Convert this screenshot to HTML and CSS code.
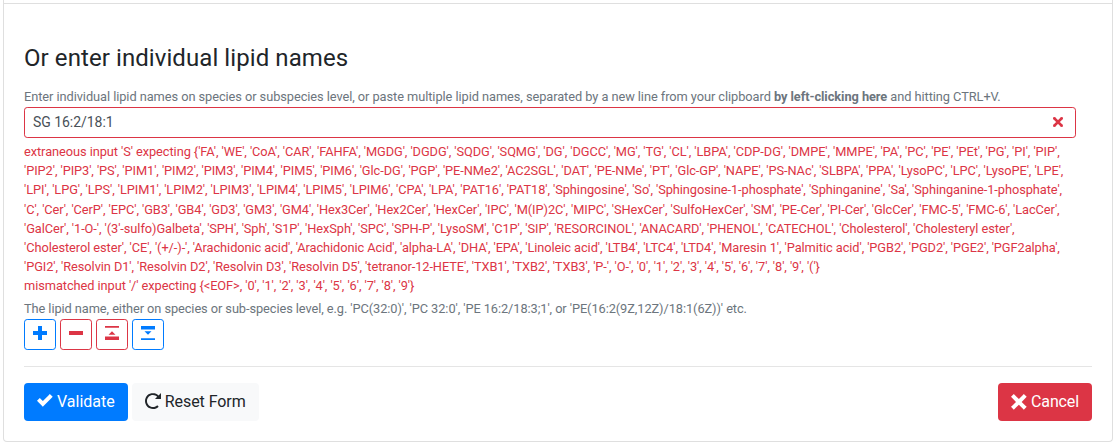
FILE: index.html
```html
<!DOCTYPE html>
<html lang="en">
<head>
<meta charset="utf-8">
<title>Lipid names</title>
<link rel="stylesheet" href="styles.css">
</head>
<body>
<main class="card">
  <div class="card-divider"></div>
  <form class="card-body">
    <h4 class="title">Or enter individual lipid names</h4>
    <p class="small muted">Enter individual lipid names on species or subspecies level, or paste multiple lipid names, separated by a new line from your clipboard <strong>by left-clicking here</strong> and hitting CTRL+V.</p>
    <div class="field">
      <div class="control">
        <span>SG 16:2/18:1</span>
        <svg class="invalid-icon" viewBox="-.5 -.5 4 4"><path d="M0 0l3 3m0-3L0 3" stroke="currentColor" fill="none"/><g fill="currentColor"><circle r=".5"/><circle cx="3" r=".5"/><circle cy="3" r=".5"/><circle cx="3" cy="3" r=".5"/></g></svg>
      </div>
      <div class="small feedback">extraneous input 'S' expecting {'FA', 'WE', 'CoA', 'CAR', 'FAHFA', 'MGDG', 'DGDG', 'SQDG', 'SQMG', 'DG', 'DGCC', 'MG', 'TG', 'CL', 'LBPA', 'CDP-DG', 'DMPE', 'MMPE', 'PA', 'PC', 'PE', 'PEt', 'PG', 'PI', 'PIP',<br>
'PIP2', 'PIP3', 'PS', 'PIM1', 'PIM2', 'PIM3', 'PIM4', 'PIM5', 'PIM6', 'Glc-DG', 'PGP', 'PE-NMe2', 'AC2SGL', 'DAT', 'PE-NMe', 'PT', 'Glc-GP', 'NAPE', 'PS-NAc', 'SLBPA', 'PPA', 'LysoPC', 'LPC', 'LysoPE', 'LPE',<br>
'LPI', 'LPG', 'LPS', 'LPIM1', 'LPIM2', 'LPIM3', 'LPIM4', 'LPIM5', 'LPIM6', 'CPA', 'LPA', 'PAT16', 'PAT18', 'Sphingosine', 'So', 'Sphingosine-1-phosphate', 'Sphinganine', 'Sa', 'Sphinganine-1-phosphate',<br>
'C', 'Cer', 'CerP', 'EPC', 'GB3', 'GB4', 'GD3', 'GM3', 'GM4', 'Hex3Cer', 'Hex2Cer', 'HexCer', 'IPC', 'M(IP)2C', 'MIPC', 'SHexCer', 'SulfoHexCer', 'SM', 'PE-Cer', 'PI-Cer', 'GlcCer', 'FMC-5', 'FMC-6', 'LacCer',<br>
'GalCer', '1-O-', '(3'-sulfo)Galbeta', 'SPH', 'Sph', 'S1P', 'HexSph', 'SPC', 'SPH-P', 'LysoSM', 'C1P', 'SIP', 'RESORCINOL', 'ANACARD', 'PHENOL', 'CATECHOL', 'Cholesterol', 'Cholesteryl ester',<br>
'Cholesterol ester', 'CE', '(+/-)-', 'Arachidonic acid', 'Arachidonic Acid', 'alpha-LA', 'DHA', 'EPA', 'Linoleic acid', 'LTB4', 'LTC4', 'LTD4', 'Maresin 1', 'Palmitic acid', 'PGB2', 'PGD2', 'PGE2', 'PGF2alpha',<br>
'PGI2', 'Resolvin D1', 'Resolvin D2', 'Resolvin D3', 'Resolvin D5', 'tetranor-12-HETE', 'TXB1', 'TXB2', 'TXB3', 'P-', 'O-', '0', '1', '2', '3', '4', '5', '6', '7', '8', '9', '('}<br>
mismatched input '/' expecting {&lt;EOF&gt;, '0', '1', '2', '3', '4', '5', '6', '7', '8', '9'}</div>
      <p class="small muted help">The lipid name, either on species or sub-species level, e.g. 'PC(32:0)', 'PC 32:0', 'PE 16:2/18:3;1', or 'PE(16:2(9Z,12Z)/18:1(6Z))' etc.</p>
    </div>
    <div class="tools">
      <button type="button" class="tool blue" aria-label="Add"><svg viewBox="0 0 14 14"><path d="M5 0h4v5h5v4H9v5H5V9H0V5h5z"/></svg></button>
      <button type="button" class="tool red" aria-label="Remove"><svg viewBox="0 0 14 14"><path d="M0 5h14v4H0z"/></svg></button>
      <button type="button" class="tool red" aria-label="Collapse up"><svg viewBox="0 0 14 14"><path d="M0 0h14v1.75H0zM7 5.25l3.5 3.5h-7zM0 10.5h14V14H0z"/></svg></button>
      <button type="button" class="tool blue" aria-label="Collapse down"><svg viewBox="0 0 14 14"><path d="M0 0h14v3.5H0zM3.5 5.25h7L7 8.75zM0 12.25h14V14H0z"/></svg></button>
    </div>
    <hr class="rule">
    <div class="actions">
      <button type="button" class="btn primary"><svg viewBox="0 0 8 8"><path transform="translate(0 .5)" d="M6.41 0l-.69.72-2.78 2.78-.81-.78-.72-.72-1.41 1.41.72.72 1.5 1.5.69.72.72-.72 3.5-3.5.72-.72-1.44-1.41z"/></svg><span>Validate</span></button>
      <button type="button" class="btn light"><svg viewBox="0 0 8 8"><path d="M4 0c-2.2 0-4 1.8-4 4s1.8 4 4 4c1.1 0 2.12-.43 2.84-1.16l-.72-.72c-.54.54-1.29.88-2.13.88-1.66 0-3-1.34-3-3s1.34-3 3-3c.83 0 1.55.36 2.09.91l-1.09 1.09h3v-3l-1.19 1.19c-.72-.72-1.71-1.19-2.81-1.19z"/></svg><span>Reset Form</span></button>
      <button type="button" class="btn danger"><svg viewBox="0 0 8 8"><path d="M1.41 0l-1.41 1.41.72.72 1.78 1.81-1.78 1.78-.72.69 1.41 1.44.72-.72 1.81-1.81 1.78 1.81.69.72 1.44-1.44-.72-.69-1.81-1.78 1.81-1.81.72-.72-1.44-1.41-.69.72-1.78 1.78-1.81-1.78-.72-.72z"/></svg><span>Cancel</span></button>
    </div>
  </form>
</main>
</body>
</html>
```
FILE: styles.css
```css
* { box-sizing: border-box; }
body {
  margin: 0;
  padding: 0 2px 0 3px;
  background: #fff;
  color: #212529;
  font: 16px/1.5 Roboto, "Liberation Sans", sans-serif;
  overflow: hidden;
}
.card {
  height: 442px;
  padding-top: 3px;
  border: 1px solid #dfdfdf;
  border-top: 0;
  border-radius: 0 0 4px 4px;
}
.card-divider { height: 1px; background: #dfdfdf; }
.card-body { padding: 40px 20px 20px; }
.title { margin: 0 0 14.4px; font-size: 24px; font-weight: 400; line-height: 28.8px; letter-spacing: .08px; }
.small { margin: 0; font-size: 12.8px; line-height: 19.2px; letter-spacing: -.06px; white-space: nowrap; }
.muted { color: #6c757d; }
.small strong { font-weight: 700; }
.field { width: 1052px; padding-top: .6px; }
.control {
  display: flex;
  align-items: center;
  justify-content: space-between;
  height: 31px;
  padding: 0 12px 0 8px;
  border: 1px solid #dc3545;
  border-radius: 3.2px;
  color: #495057;
  font-size: 14px;
  line-height: 21px;
  letter-spacing: -.04px;
}
.invalid-icon { width: 10px; height: 10px; color: #dc3545; }
.feedback { margin-top: 4px; color: #dc3545; letter-spacing: -.066px; }
.help { margin: 3.2px 0 .8px; letter-spacing: -.072px; }
.tools { display: flex; gap: 4px; }
.tool {
  display: flex;
  justify-content: center;
  width: 32px;
  height: 31px;
  padding: 6px 0 0;
  border: 1px solid currentColor;
  border-radius: 3.2px;
  background: #fff;
}
.tool svg { width: 14px; height: 14px; fill: currentColor; }
.blue { color: #007bff; }
.red { color: #dc3545; }
.rule { margin: 16px 0; border: 0; border-top: 1px solid #e5e5e5; }
.actions { display: flex; gap: 4px; }
.btn {
  display: flex;
  gap: 4px;
  height: 38px;
  padding: 6px 12px;
  border: 1px solid transparent;
  border-radius: 4px;
  font: 16px/24px Roboto, "Liberation Sans", sans-serif;
  white-space: nowrap;
}
.btn svg { width: 16px; height: 16px; margin-top: 3px; fill: currentColor; }
.primary { background: #007bff; color: #fff; }
.light { background: #f8f9fa; color: #212529; letter-spacing: -.07px; }
.danger { margin-left: auto; background: #dc3545; color: #fff; letter-spacing: -.12px; }
.danger svg { margin-top: 4px; }
```
